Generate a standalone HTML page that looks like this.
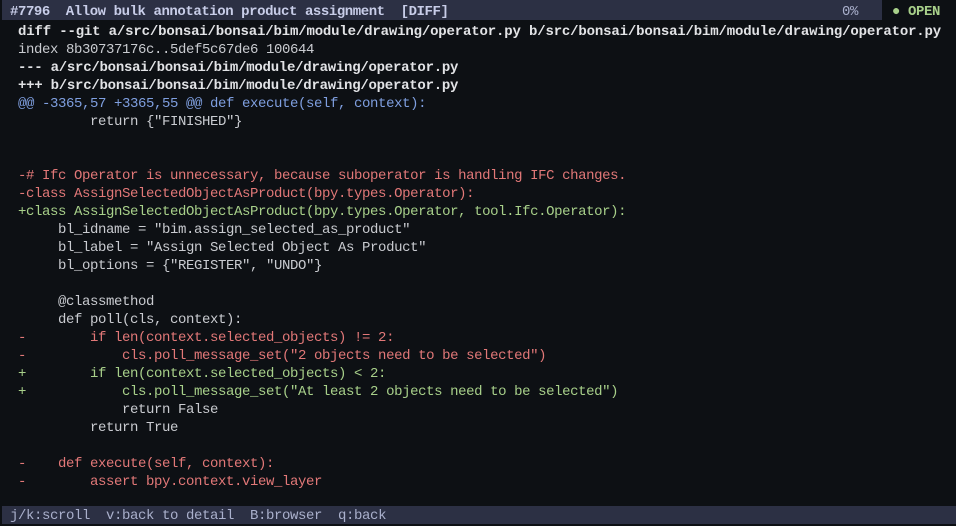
<!DOCTYPE html>
<html><head><meta charset="utf-8"><style>
html,body{margin:0;padding:0;background:#0d1014;width:956px;height:526px;overflow:hidden}
body{font-family:"Liberation Mono",monospace;font-size:14px;letter-spacing:-0.4px;color:#c9cbd0;position:relative}
.l{position:absolute;left:18px;height:18px;line-height:18px;white-space:pre}
.b{font-weight:bold;color:#e2e3e6}
.h{color:#7f9fe0}
.r{color:#e27878}
.g{color:#a8d08a}
#top{position:absolute;left:2px;top:0;width:880px;height:20px;background:#2c3044}
#bot{position:absolute;left:2px;top:506px;width:954px;height:18px;background:#2c3044}
</style></head><body>
<div id="top"></div>
<div class="l" style="left:10px;top:3px;font-weight:bold;color:#c8cde8;letter-spacing:-0.43px">#7796  Allow bulk annotation product assignment  [DIFF]</div>
<div class="l" style="left:842px;top:3px;color:#aab0cc">0%</div>
<div class="l g" style="left:892px;top:3px;font-weight:bold">● OPEN</div>
<div class="l b" style="top:23px;letter-spacing:-0.16px">diff --git a/src/bonsai/bonsai/bim/module/drawing/operator.py b/src/bonsai/bonsai/bim/module/drawing/operator.py</div>
<div class="l" style="top:41px">index 8b30737176c..5def5c67de6 100644</div>
<div class="l b" style="top:59px;letter-spacing:-0.25px">--- a/src/bonsai/bonsai/bim/module/drawing/operator.py</div>
<div class="l b" style="top:77px;letter-spacing:-0.25px">+++ b/src/bonsai/bonsai/bim/module/drawing/operator.py</div>
<div class="l h" style="top:95px">@@ -3365,57 +3365,55 @@ def execute(self, context):</div>
<div class="l" style="top:113px">         return {"FINISHED"}</div>
<div class="l r" style="top:167px">-# Ifc Operator is unnecessary, because suboperator is handling IFC changes.</div>
<div class="l r" style="top:185px">-class AssignSelectedObjectAsProduct(bpy.types.Operator):</div>
<div class="l g" style="top:203px">+class AssignSelectedObjectAsProduct(bpy.types.Operator, tool.Ifc.Operator):</div>
<div class="l" style="top:221px">     bl_idname = "bim.assign_selected_as_product"</div>
<div class="l" style="top:239px">     bl_label = "Assign Selected Object As Product"</div>
<div class="l" style="top:257px">     bl_options = {"REGISTER", "UNDO"}</div>
<div class="l" style="top:293px">     @classmethod</div>
<div class="l" style="top:311px">     def poll(cls, context):</div>
<div class="l r" style="top:329px">-        if len(context.selected_objects) != 2:</div>
<div class="l r" style="top:347px">-            cls.poll_message_set("2 objects need to be selected")</div>
<div class="l g" style="top:365px">+        if len(context.selected_objects) &lt; 2:</div>
<div class="l g" style="top:383px">+            cls.poll_message_set("At least 2 objects need to be selected")</div>
<div class="l" style="top:401px">             return False</div>
<div class="l" style="top:419px">         return True</div>
<div class="l r" style="top:455px">-    def execute(self, context):</div>
<div class="l r" style="top:473px">-        assert bpy.context.view_layer</div>
<div id="bot"></div>
<div class="l" style="left:10px;top:507px;color:#aab0cc">j/k:scroll  v:back to detail  B:browser  q:back</div>
</body></html>
